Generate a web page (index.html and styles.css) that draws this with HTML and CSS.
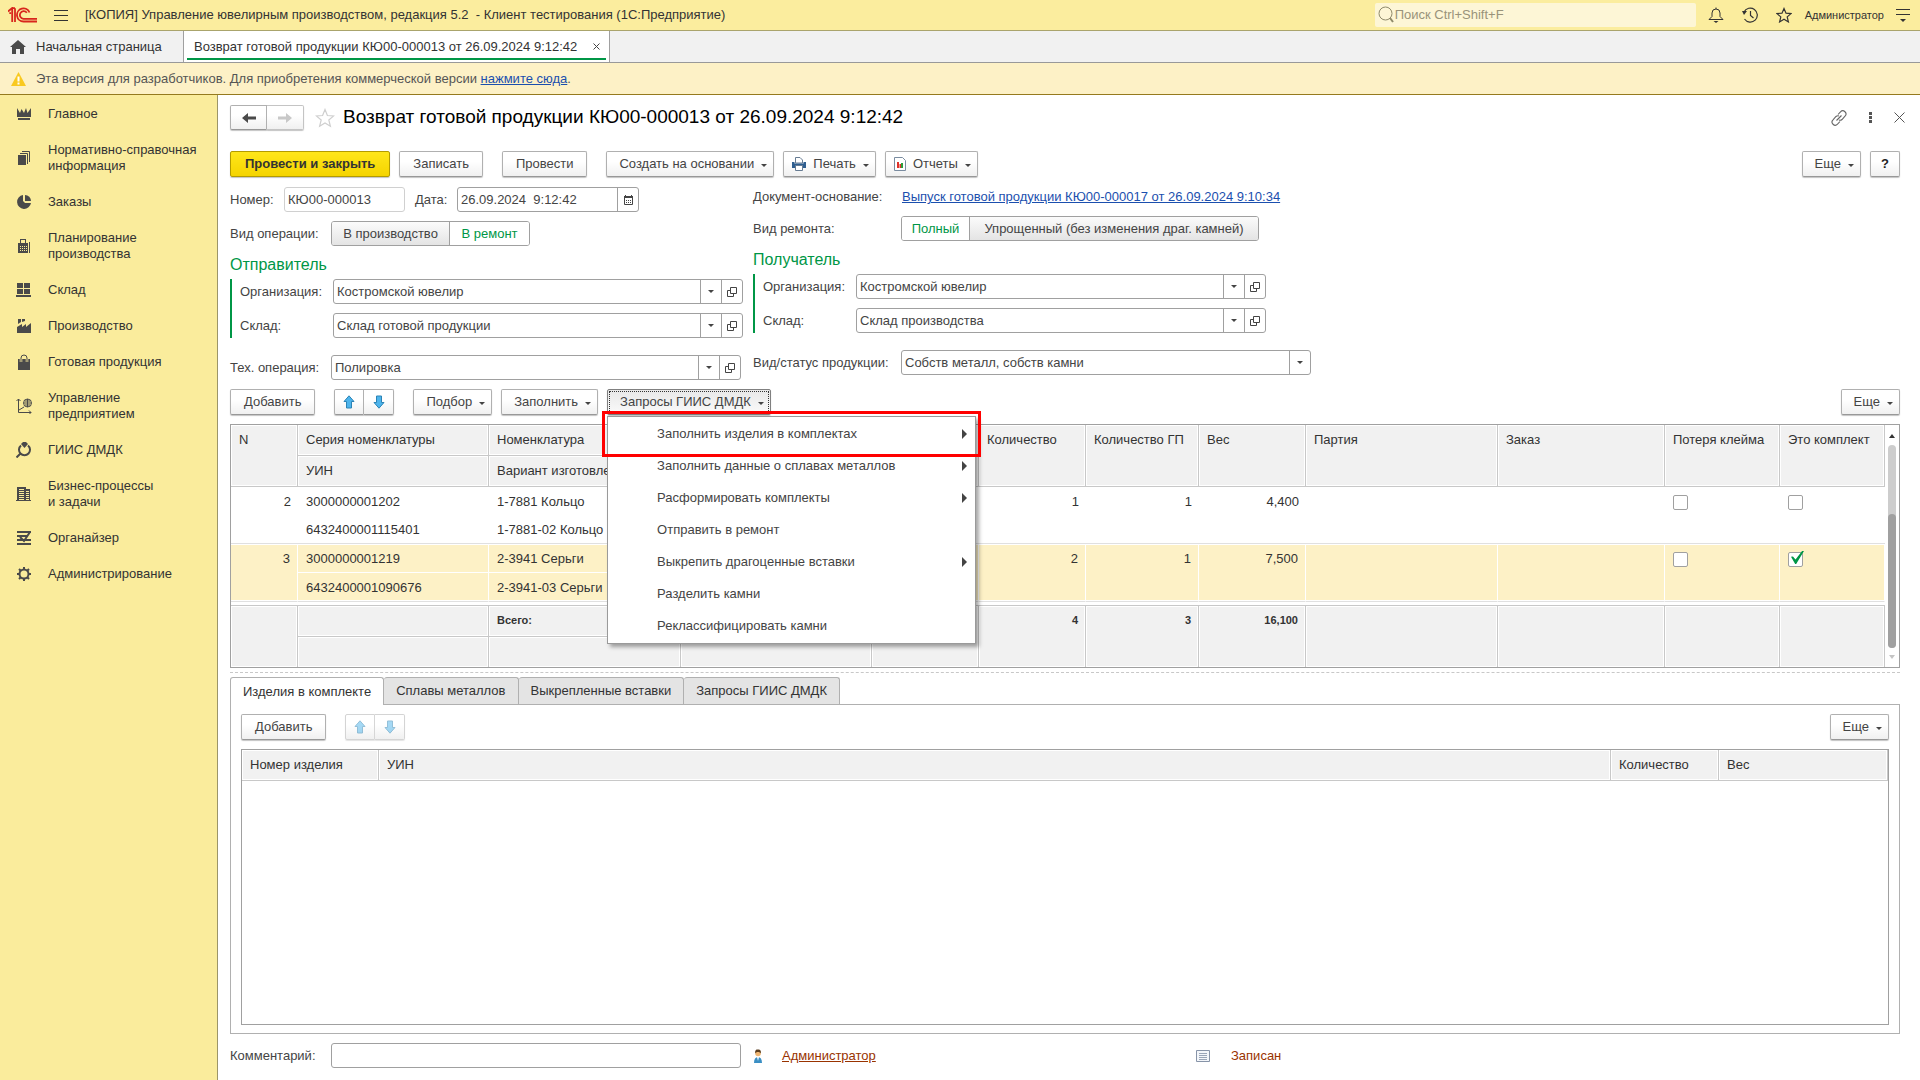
FILE: index.html
```html
<!DOCTYPE html>
<html lang="ru">
<head>
<meta charset="utf-8">
<meta name="viewport" content="width=device-width, initial-scale=1">
<title>Возврат готовой продукции КЮ00-000013</title>
<link rel="stylesheet" href="styles.css">
</head>
<body>
<svg class="sprite" aria-hidden="true">
  <symbol id="open" viewBox="0 0 10 10"><path d="M3.500 .5h6v6h-6zM3 3.500H.5v6h6V7" fill="none" stroke="#444"/></symbol>
  <symbol id="up" viewBox="0 0 12 14"><path d="M6 .8 11 6.500H8.500v6.500h-5V6.500H1z" fill="#4db4ec" stroke="#2b83b5"/></symbol>
  <symbol id="down" viewBox="0 0 12 14"><path d="M6 13.200 11 7.500H8.500V1h-5v6.500H1z" fill="#4db4ec" stroke="#2b83b5"/></symbol>
</svg>

<header class="topbar">
  <svg class="logo" width="29" height="16" viewBox="0 0 29 16" fill="none" stroke="#d8261c" stroke-width="1.8"><path d="M0 4.500 4.200 1V15M2.200 7V5.200M7 1.200V15M4.200 1.200H7M21.500 5.500A6.500 6.500 0 1 0 15.500 14.500H29M18.800 5.800a3.800 3.800 0 1 0-3.300 6H29"/></svg>
  <button class="bare burger" type="button" aria-label="Меню"><svg width="14" height="12" viewBox="0 0 14 12" stroke="#333"><path d="M0 1.500h14M0 6.500h14M0 11.500h14"/></svg></button>
  <span class="app-title">[КОПИЯ] Управление ювелирным производством, редакция 5.2&nbsp; - Клиент тестирования (1С:Предприятие)</span>
  <label class="search"><svg width="16" height="18" viewBox="0 0 16 18" fill="none" stroke="#8f8a6a"><circle cx="7.500" cy="7.500" r="6.500"/><path d="m12 12 3 4" stroke-width="2"/></svg><input type="search" placeholder="Поиск Ctrl+Shift+F" aria-label="Поиск"></label>
  <button class="bare top-icon" type="button" aria-label="Уведомления"><svg width="16" height="16" viewBox="0 0 16 16" fill="none" stroke="#333"><path d="M1 12.500h14L12 9.500V6a4 4 0 0 0-8 0v3.500zM8 2V.5"/><path d="M5.500 14h5L8 16z" fill="#333" stroke="none"/></svg></button>
  <button class="bare top-icon" type="button" aria-label="История"><svg width="16" height="16" viewBox="0 0 16 16" fill="none" stroke="#333" stroke-width="1.200"><path d="M2 5A7 7 0 1 1 2.500 12M8.500 4v4.500l3 2.500"/><path d="M0 4h5L2 8z" fill="#333" stroke="none"/></svg></button>
  <button class="bare top-icon" type="button" aria-label="Избранное"><svg width="16" height="16" viewBox="0 0 16 16" fill="none" stroke="#333" stroke-width="1.200"><path d="m8 1.500 2 4.700 5 .4-3.800 3.300 1.200 5L8 12.200 3.600 14.900l1.200-5L1 6.600l5-.4z"/></svg></button>
  <a class="user" href="#">Администратор</a>
  <button class="bare" type="button" aria-label="Настройки"><svg width="14" height="14" viewBox="0 0 14 14" stroke="#333"><path d="M0 1.500h14M0 6.500h14"/><path d="M4 11h6l-3 3z" fill="#333" stroke="none"/></svg></button>
</header>

<nav class="tabs" aria-label="Открытые окна">
  <a class="tab home" href="#"><svg width="16" height="14" viewBox="0 0 16 14" fill="#4a4a4a"><path d="M8 0 0 7h2v7h4V9h4v5h4V7h2z"/></svg>Начальная страница</a>
  <div class="tab active"><a href="#">Возврат готовой продукции КЮ00-000013 от 26.09.2024 9:12:42</a><button class="bare" type="button" aria-label="Закрыть вкладку"><svg width="7" height="7" viewBox="0 0 7 7" stroke="#444"><path d="m.5.5 6 6M6.500.5l-6 6"/></svg></button></div>
</nav>

<div class="notice"><svg width="15" height="14" viewBox="0 0 15 14"><path d="M7.500 0 15 14H0z" fill="#f9c920"/><path d="M7.500 4.500v5M7.500 10.500v2" stroke="#fff" stroke-width="2"/></svg><span>Эта версия для разработчиков. Для приобретения коммерческой версии <a href="#">нажмите сюда</a>.</span></div>

<div class="workspace">
<nav class="sidebar" aria-label="Разделы">
  <a href="#"><svg viewBox="0 0 16 16"><path d="M1 2l3 5 1.500-4L8 7l2-5 1.500 5L15 2v9H1zM2 12h12v2H2z"/></svg>Главное</a>
  <a href="#"><svg viewBox="0 0 16 16"><path d="M2 5h8v10H2z"/><path d="M4 3.500h7.500V14M6 1.500h7.500V12" fill="none" stroke="#4a4a4a"/></svg>Нормативно-справочная информация</a>
  <a href="#"><svg viewBox="0 0 16 16"><path d="M7 1a7 7 0 1 0 8 8H9L7 7z"/><path d="M9 1a6 6 0 0 1 6 6H9z"/></svg>Заказы</a>
  <a href="#"><svg viewBox="0 0 16 16"><path d="M4 1h6v4h2v10H2V5h2z"/><path d="M5 2h4v3H5z" fill="#faec9c"/><path d="M4 8.500h7M4 10.500h7M4 12.500h7" stroke="#faec9c" stroke-dasharray="1 1"/><path d="M13.500 4v11" stroke="#4a4a4a"/></svg>Планирование<br>производства</a>
  <a href="#"><svg viewBox="0 0 16 16"><path d="M1 1h6v5H1zM8 1h6v5H8zM1 7h6v5H1zM8 7h6v5H8zM0 13h15v2H0z"/></svg>Склад</a>
  <a href="#"><svg viewBox="0 0 16 16"><path d="M1 9l5-3v3l4-3v3l5-4v10H1zM2 1h3v3L2 6zM6 1h3v2L6 4z"/></svg>Производство</a>
  <a href="#"><svg viewBox="0 0 16 16"><path d="M2 5h12v11H2z"/><path d="M5 8V4a3 3 0 0 1 6 0v4" fill="none" stroke="#faec9c" stroke-width="2.500"/><path d="M5 8V4a3 3 0 0 1 6 0v4" fill="none" stroke="#4a4a4a"/></svg>Готовая продукция</a>
  <a href="#"><svg viewBox="0 0 16 16"><g fill="none" stroke="#4a4a4a"><path d="M2.500 1v13.500H15M.5 3l2-2 2 2M13 12.500l2 2-2 2M3 12l5-3"/><circle cx="11.500" cy="5" r="4"/><path d="M8 5h7M9 3h5M9 7h5M11.500 1v8"/></g></svg>Управление<br>предприятием</a>
  <a href="#"><svg viewBox="0 0 16 16"><path d="M5 2l2-2h3l2 2-3.500 4z"/><g fill="none" stroke="#4a4a4a" stroke-width="2"><path d="M5 3.500a5.500 5.500 0 1 0 7 0M4 12l-3.500 3.500"/></g></svg>ГИИС ДМДК</a>
  <a href="#"><svg viewBox="0 0 16 16"><path d="M1 1h9v2h4v11h1v1H0v-1h1z"/><path d="M3 3.500h5M3 5.500h5M3 7.500h5M3 9.500h5M3 11.500h5M3 13.500h5M10 5.500h3M10 7.500h3M10 9.500h3M10 11.500h3M10 13.500h3" stroke="#faec9c"/></svg>Бизнес-процессы<br>и задачи</a>
  <a href="#"><svg viewBox="0 0 16 16"><path d="M1 1h14v2H1zM1 5h11v2H1zM1 9h14v2H1zM1 13h14v2H1z"/><path d="M4 7l4 4 6-9" fill="none" stroke="#4a4a4a" stroke-width="2"/></svg>Органайзер</a>
  <a href="#"><svg viewBox="0 0 16 16"><g fill="none" stroke="#4a4a4a"><circle cx="8" cy="8" r="4.500" stroke-width="2"/><path d="M8 1v3M8 12v3M1 8h3M12 8h3M3 3l2 2M11 11l2 2M13 3l-2 2M5 11l-2 2" stroke-width="2"/></g></svg>Администрирование</a>
</nav>

<main class="page">
  <div class="heading">
    <div class="pair"><button class="btn" type="button" aria-label="Назад"><svg width="14" height="12" viewBox="0 0 14 12"><path d="M0 6l6-5v3.500h8v3H6V11z" fill="#4a4a4a"/></svg></button><button class="btn off" type="button" disabled aria-label="Вперед"><svg width="14" height="12" viewBox="0 0 14 12"><path d="M14 6 8 1v3.500H0v3h8V11z" fill="#c8c8c8"/></svg></button></div>
    <button class="bare fav" type="button" aria-label="В избранное"><svg width="20" height="20" viewBox="0 0 20 20" fill="none" stroke="#cfcfcf" stroke-width="1.200"><path d="m10 1.500 2.400 6 6.300.4-4.900 4.100 1.600 6.300L10 14.900l-5.400 3.400L6.200 12 1.300 7.900l6.300-.4z"/></svg></button>
    <h1>Возврат готовой продукции КЮ00-000013 от 26.09.2024 9:12:42</h1>
    <div class="window-tools">
      <button class="bare" type="button" aria-label="Ссылка"><svg width="16" height="16" viewBox="0 0 16 16" fill="none" stroke="#666" stroke-width="1.100"><path d="M7 4.500 9.500 1.800a3 3 0 0 1 4.500 4.400L11 9.500a3 3 0 0 1-3 .5M9 11.500l-2.500 2.700A3 3 0 0 1 2 9.800L5 6.500A3 3 0 0 1 8 6M5.500 10.500l5-5"/></svg></button>
      <button class="bare" type="button" aria-label="Действия"><svg width="3" height="11" viewBox="0 0 3 11" fill="#555"><path d="M0 0h3v3H0zM0 4h3v3H0zM0 8h3v3H0z"/></svg></button>
      <button class="bare" type="button" aria-label="Закрыть"><svg width="11" height="11" viewBox="0 0 11 11" stroke="#555"><path d="m.5.5 10 10M10.500.5l-10 10"/></svg></button>
    </div>
  </div>

  <div class="commands">
    <div class="group"><button class="btn primary" type="button">Провести и закрыть</button><button class="btn" type="button">Записать</button></div>
    <button class="btn" type="button">Провести</button>
    <div class="group">
      <button class="btn more" type="button">Создать на основании<i class="caret"></i></button>
      <button class="btn more icon" type="button"><svg width="14" height="14" viewBox="0 0 14 14"><path d="M3.500.5H8l2.500 2.500v3h-7z" fill="#fff" stroke="#667b92"/><path d="M0 5h2.500v1.500h9V5H14v6H0z" fill="#2f5e8f"/><path d="M3.500 8.500h7v5h-7z" fill="#fff" stroke="#667b92"/></svg>Печать<i class="caret"></i></button>
      <button class="btn more icon" type="button"><svg width="12" height="14" viewBox="0 0 12 14"><path d="M.5.5h8l3 3v10H.5z" fill="#fff" stroke="#7a8ca0"/><path d="M3 5h2v6H3zM5.500 7h1.500v4H5.500z" fill="#e0322a"/><path d="M7 6h2v5H7z" fill="#2d9e3c"/></svg>Отчеты<i class="caret"></i></button>
    </div>
    <div class="group end"><button class="btn more" type="button">Еще<i class="caret"></i></button><button class="btn help" type="button" aria-label="Справка">?</button></div>
  </div>

  <form class="form">
    <div class="column">
      <div class="row"><label class="cap num" for="number">Номер:</label><span class="field pale number"><input id="number" value="КЮ00-000013"></span><label class="cap date-cap" for="date">Дата:</label><span class="field date"><input id="date" value="26.09.2024  9:12:42"><button type="button" aria-label="Календарь"><svg width="9" height="10" viewBox="0 0 9 10"><path d="M0 1h1V0h1v1h5V0h1v1h1v2H0z" fill="#444"/><path d="M.5 3v6.500h8V3" fill="none" stroke="#444"/><path d="M2 5.500h5M2 7.500h5" stroke="#444" stroke-dasharray="1 1"/></svg></button></span></div>
      <div class="row"><span class="cap">Вид операции:</span><span class="toggle" role="radiogroup" aria-label="Вид операции"><label class="wide"><input type="radio" name="kind">В производство</label><label class="mid"><input type="radio" name="kind" checked>В ремонт</label></span></div>
      <h2>Отправитель</h2>
      <div class="block">
        <div class="row"><label class="cap" for="org1">Организация:</label><span class="field"><input id="org1" value="Костромской ювелир"><button type="button" aria-label="Выбрать"><i class="caret"></i></button><button type="button" aria-label="Открыть"><svg width="10" height="10"><use href="#open"/></svg></button></span></div>
        <div class="row"><label class="cap" for="store1">Склад:</label><span class="field"><input id="store1" value="Склад готовой продукции"><button type="button" aria-label="Выбрать"><i class="caret"></i></button><button type="button" aria-label="Открыть"><svg width="10" height="10"><use href="#open"/></svg></button></span></div>
      </div>
      <div class="row last"><label class="cap" for="tech">Тех. операция:</label><span class="field"><input id="tech" value="Полировка"><button type="button" aria-label="Выбрать"><i class="caret"></i></button><button type="button" aria-label="Открыть"><svg width="10" height="10"><use href="#open"/></svg></button></span></div>
    </div>
    <div class="column right">
      <div class="row base"><span class="cap">Документ-основание:</span><a class="link" href="#">Выпуск готовой продукции КЮ00-000017 от 26.09.2024 9:10:34</a></div>
      <div class="row"><span class="cap">Вид ремонта:</span><span class="toggle" role="radiogroup" aria-label="Вид ремонта"><label class="slim"><input type="radio" name="repair" checked>Полный</label><label class="long"><input type="radio" name="repair">Упрощенный (без изменения драг. камней)</label></span></div>
      <h2>Получатель</h2>
      <div class="block">
        <div class="row"><label class="cap" for="org2">Организация:</label><span class="field"><input id="org2" value="Костромской ювелир"><button type="button" aria-label="Выбрать"><i class="caret"></i></button><button type="button" aria-label="Открыть"><svg width="10" height="10"><use href="#open"/></svg></button></span></div>
        <div class="row"><label class="cap" for="store2">Склад:</label><span class="field"><input id="store2" value="Склад производства"><button type="button" aria-label="Выбрать"><i class="caret"></i></button><button type="button" aria-label="Открыть"><svg width="10" height="10"><use href="#open"/></svg></button></span></div>
      </div>
      <div class="row last"><label class="cap" for="status">Вид/статус продукции:</label><span class="field choice"><select id="status"><option>Собств металл, собств камни</option></select><i class="caret"></i></span></div>
    </div>
  </form>

  <div class="commands items">
    <button class="btn" type="button">Добавить</button>
    <div class="pair arrows"><button class="btn" type="button" aria-label="Вверх"><svg width="12" height="14"><use href="#up"/></svg></button><button class="btn" type="button" aria-label="Вниз"><svg width="12" height="14"><use href="#down"/></svg></button></div>
    <div class="group">
      <button class="btn more" type="button">Подбор<i class="caret"></i></button>
      <button class="btn more" type="button">Заполнить<i class="caret"></i></button>
      <div class="dropdown">
        <button class="btn more pressed" type="button" aria-expanded="true">Запросы ГИИС ДМДК<i class="caret"></i></button>
        <div class="menu" role="menu">
          <button class="sub" type="button" role="menuitem">Заполнить изделия в комплектах</button>
          <button class="sub" type="button" role="menuitem">Заполнить данные о сплавах металлов</button>
          <button class="sub" type="button" role="menuitem">Расформировать комплекты</button>
          <button type="button" role="menuitem">Отправить в ремонт</button>
          <button class="sub" type="button" role="menuitem">Выкрепить драгоценные вставки</button>
          <button type="button" role="menuitem">Разделить камни</button>
          <button type="button" role="menuitem">Реклассифицировать камни</button>
          <div class="marker"></div>
        </div>
      </div>
    </div>
    <div class="group end"><button class="btn more" type="button">Еще<i class="caret"></i></button></div>
  </div>

  <div class="sheet">
    <table class="goods">
      <colgroup><col class="c67"><col class="c191"><col class="c192"><col class="c191"><col class="c107"><col class="c107"><col class="c113"><col class="c107"><col class="c192"><col class="c167"><col class="c115"><col class="c105"></colgroup>
      <thead>
        <tr><th rowspan="2">N</th><th>Серия номенклатуры</th><th>Номенклатура</th><th></th><th rowspan="2"></th><th rowspan="2">Количество</th><th rowspan="2">Количество ГП</th><th rowspan="2">Вес</th><th rowspan="2">Партия</th><th rowspan="2">Заказ</th><th rowspan="2">Потеря клейма</th><th rowspan="2">Это комплект</th></tr>
        <tr><th>УИН</th><th>Вариант изготовления</th><th></th></tr>
      </thead>
      <tbody>
        <tr class="first"><td class="n" rowspan="2">2</td><td>3000000001202</td><td>1-7881 Кольцо</td><td></td><td rowspan="2"></td><td class="n" rowspan="2">1</td><td class="n" rowspan="2">1</td><td class="n" rowspan="2">4,400</td><td rowspan="2"></td><td rowspan="2"></td><td class="tick" rowspan="2"><input type="checkbox" aria-label="Потеря клейма"></td><td class="tick" rowspan="2"><input type="checkbox" aria-label="Это комплект"></td></tr>
        <tr class="second"><td>6432400001115401</td><td>1-7881-02 Кольцо</td><td></td></tr>
        <tr class="selected"><td class="n" rowspan="2">3</td><td class="upper">3000000001219</td><td class="upper">2-3941 Серьги</td><td class="upper"></td><td rowspan="2"></td><td class="n" rowspan="2">2</td><td class="n" rowspan="2">1</td><td class="n" rowspan="2">7,500</td><td rowspan="2"></td><td rowspan="2"></td><td class="tick" rowspan="2"><input type="checkbox" aria-label="Потеря клейма"></td><td class="tick" rowspan="2"><input type="checkbox" aria-label="Это комплект" checked></td></tr>
        <tr class="selected"><td>6432400001090676</td><td>2-3941-03 Серьги</td><td></td></tr>
      </tbody>
      <tfoot>
        <tr class="spacer"><td colspan="12"></td></tr>
        <tr><td class="edge" rowspan="2"></td><td></td><td>Всего:</td><td></td><td class="edge" rowspan="2"></td><td class="n edge" rowspan="2">4</td><td class="n edge" rowspan="2">3</td><td class="n edge" rowspan="2">16,100</td><td class="edge" rowspan="2"></td><td class="edge" rowspan="2"></td><td class="edge" rowspan="2"></td><td class="edge" rowspan="2"></td></tr>
        <tr><td class="edge"></td><td class="edge"></td><td class="edge"></td></tr>
      </tfoot>
    </table>
    <div class="scroll"><i class="tri-up"></i><div class="track"><div class="thumb"></div></div><i class="tri-down"></i></div>
  </div>

  <div class="splitter"></div>

  <section class="lower">
    <div class="subtabs" role="tablist"><button class="on" type="button" role="tab" aria-selected="true">Изделия в комплекте</button><button type="button" role="tab">Сплавы металлов</button><button type="button" role="tab">Выкрепленные вставки</button><button type="button" role="tab">Запросы ГИИС ДМДК</button></div>
    <div class="panel">
      <div class="commands inner">
        <button class="btn" type="button">Добавить</button>
        <div class="pair arrows dim"><button class="btn" type="button" disabled aria-label="Вверх"><svg width="12" height="14"><use href="#up"/></svg></button><button class="btn" type="button" disabled aria-label="Вниз"><svg width="12" height="14"><use href="#down"/></svg></button></div>
        <div class="group end"><button class="btn more" type="button">Еще<i class="caret"></i></button></div>
      </div>
      <div class="sheet grow">
        <table class="kit">
          <colgroup><col class="k1"><col><col class="k3"><col class="k4"></colgroup>
          <thead><tr><th>Номер изделия</th><th>УИН</th><th>Количество</th><th>Вес</th></tr></thead>
        </table>
      </div>
    </div>
  </section>

  <footer class="bottom">
    <label class="cap" for="comment">Комментарий:</label><span class="field comment"><input id="comment"></span>
    <svg class="person" width="12" height="14" viewBox="0 0 12 14"><path d="M2 14c0-4 1.500-6 4-6s4 2 4 6z" fill="#3a8fc4"/><path d="M5 8h2l-1 4z" fill="#fff"/><circle cx="6" cy="4.500" r="2.800" fill="#f0b673"/><path d="M3 4.500C3 1 4 .5 6 .5s3 .5 3 4C8 2.500 4 2.500 3 4.500z" fill="#5a3d1e"/></svg>
    <a class="author" href="#">Администратор</a>
    <svg class="doc" width="14" height="12" viewBox="0 0 14 12"><path d="M.5.5h13v11H.5z" fill="#f3f6fa" stroke="#8794a8"/><path d="M3 3.500h8M3 5.500h8M3 7.500h8M3 9.500h8" stroke="#9aa6b8"/></svg>
    <span class="state">Записан</span>
  </footer>
</main>
</div>
</body>
</html>
```
FILE: styles.css
```css
* { box-sizing: border-box; }
body { margin: 0; min-height: 100vh; display: flex; flex-direction: column; background: #fff; color: #444; font: 13px/16px "Liberation Sans", Arial, sans-serif; }
button, input, select { font: inherit; color: inherit; margin: 0; }
a { color: inherit; text-decoration: none; }
svg { display: block; flex: none; }
.sprite { position: absolute; width: 0; height: 0; }
.bare { border: 0; background: none; padding: 0; display: flex; align-items: center; justify-content: center; }

.topbar { display: flex; align-items: center; height: 31px; padding: 0 10px 0 8px; background: #fbed9e; border-bottom: 1px solid #aaa46c; color: #333; }
.burger { margin: 0 17px; }
.app-title { flex: 1; white-space: nowrap; overflow: hidden; }
.search { display: flex; align-items: center; width: 321px; height: 24px; padding: 0 3px; background: #fdf6d6; border-radius: 2px; margin-right: 3px; }
.search input { flex: 1; border: 0; background: none; padding: 0 0 1px 1px; outline: 0; }
.search input::placeholder { color: #99937a; opacity: 1; }
.top-icon { width: 34px; height: 30px; }
.user { font-size: 11px; margin: 0 12px 0 4px; }

.tabs { display: flex; height: 32px; background: #f1f1f1; border-bottom: 1px solid #999; color: #333; }
.tab { display: flex; align-items: center; border-right: 1px solid #a0a0a0; white-space: nowrap; }
.home { width: 184px; padding-left: 10px; gap: 10px; }
.active { position: relative; background: #fff; padding: 0 9px 0 10px; gap: 16px; }
.active::after { content: ""; position: absolute; left: 3px; right: 3px; bottom: 2px; height: 2px; background: #009646; }

.notice { display: flex; align-items: center; gap: 10px; height: 32px; padding-left: 11px; background: #fdf1c6; border-bottom: 1px solid #957a1e; color: #555; }
.notice a, .link { color: #1b4fae; text-decoration: underline; }

.workspace { flex: 1; display: grid; grid-template-columns: 218px minmax(0, 1fr); }
.sidebar { background: #faec9c; border-right: 1px solid #9c9568; padding-top: 1px; color: #333; }
.sidebar a { display: block; position: relative; padding: 10px 8px 10px 48px; }
.sidebar svg { position: absolute; left: 16px; top: calc(50% - 8px); width: 16px; height: 16px; fill: #4a4a4a; }

.page { display: flex; flex-direction: column; padding: 10px 20px 12px 12px; }
.heading { display: flex; align-items: center; height: 25px; }
.heading h1 { font-size: 19px; line-height: 24px; font-weight: 400; color: #000; margin: 0; padding-bottom: 2px; flex: 1; }
.fav { margin: 0 8px 0 11px; }
.window-tools { display: flex; align-items: center; gap: 22px; margin-right: -5px; }

.btn { display: inline-flex; align-items: center; justify-content: center; height: 26px; padding: 0 13px; border: 1px solid #b0b0b0; border-bottom-color: #989898; border-radius: 2px; background: linear-gradient(#fff 40%, #f0f0f0); box-shadow: 0 1px 1px #c4c4c4; white-space: nowrap; }
.primary { padding: 0 14px; background: linear-gradient(#ffe61a, #f5d400); border-color: #b39b00; color: #333; font-weight: 700; }
.more { padding: 0 6px 0 12px; gap: 7px; }
.icon { padding-left: 8px; }
.help { width: 30px; padding: 0; font-weight: 700; color: #222; }
.caret { width: 0; height: 0; border: 3px solid transparent; border-top-color: #444; border-bottom: 0; margin-top: 2px; }
.pair { display: flex; }
.pair .btn { width: 37px; padding: 0; border-radius: 2px 0 0 2px; height: 25px; }
.pair .btn + .btn { border-left: 0; border-radius: 0 2px 2px 0; }
.pair .off { border-color: #c4c4c4; }
.arrows .btn { width: 30px; height: 26px; }
.dim .btn { border-color: #d4d4d4; box-shadow: 0 1px 1px #e4e4e4; }
.dim svg { opacity: .5; }
.commands { display: flex; gap: 19px; margin-top: 21px; }
.group { display: flex; gap: 9px; }
.end { margin-left: auto; }
.items { margin-top: 9px; }

.form { display: grid; grid-template-columns: 513px 558px; gap: 10px; margin-top: 10px; align-items: start; }
.row { display: flex; align-items: center; height: 25px; margin-bottom: 9px; white-space: nowrap; }
.row.last { margin: 17px 0 0; }
.row.base { height: 20px; }
.cap { width: 101px; flex: none; }
.cap.num { width: 54px; }
.cap.date-cap { width: 42px; }
.block .cap { width: 93px; }
.right .cap { width: 148px; }
.right .block .cap { width: 93px; }
.right .block .field { flex: 0 1 410px; }
.row.base .cap { width: 149px; }
.column h2 { font-size: 16px; line-height: 22px; font-weight: 400; color: #009646; margin: -1px 0 0; padding-bottom: 3px; }
.block { border-left: 2px solid #009646; padding-left: 8px; }
.block .row:last-child { margin: 0; }
.field { display: flex; flex: 1; min-width: 0; height: 25px; border: 1px solid #a0a0a0; border-radius: 3px; background: #fff; }
.column:not(.right) > .row.last .field { flex: 0 1 410px; }
.field input, .field select { flex: 1; min-width: 0; width: 0; border: 0; outline: 0; background: none; padding: 0 3px; white-space: pre; }
.field select { appearance: none; }
.field button { width: 21px; border: 0; border-left: 1px solid #a0a0a0; background: none; padding: 0; display: flex; align-items: center; justify-content: center; }
.field .caret { margin-top: 0; }
.pale { border-color: #d0d0d0; }
.row .number { flex: 0 0 121px; margin-right: 10px; }
.row .date { flex: 0 0 182px; }
.choice { position: relative; }
.choice .caret { position: absolute; right: 7px; top: 10px; pointer-events: none; }
.choice::after { content: ""; position: absolute; right: 20px; top: 0; bottom: 0; border-left: 1px solid #a0a0a0; }
.toggle { display: flex; height: 25px; border: 1px solid #a0a0a0; border-radius: 3px; overflow: hidden; }
.toggle label { display: flex; align-items: center; justify-content: center; background: linear-gradient(#fbfbfb, #e4e4e4); }
.toggle label + label { border-left: 1px solid #a0a0a0; }
.toggle input { appearance: none; width: 0; height: 0; }
.toggle label:has(:checked) { background: #fff; color: #009646; }
.wide { width: 117px; }
.mid { width: 80px; }
.slim { width: 67px; }
.long { width: 289px; }

.dropdown { position: relative; }
.pressed { border-color: #808080; background: linear-gradient(#e8e8e8, #fafafa); outline: 1px dotted #333; outline-offset: -3px; }
.menu { position: absolute; left: 0; top: 27px; width: 369px; z-index: 2; padding: 1px 0; border: 1px solid #9a9a9a; background: #fff; box-shadow: 3px 3px 4px rgba(0, 0, 0, .35); }
.menu button { display: flex; align-items: center; justify-content: space-between; width: 100%; height: 32px; border: 0; background: none; padding: 0 8px 0 49px; }
.menu .sub::after { content: ""; border: 5px solid transparent; border-left-color: #444; border-right: 0; }
.marker { position: absolute; left: -6px; right: -6px; top: -6px; height: 46px; border: 3px solid #f00; pointer-events: none; }

.sheet { display: flex; margin-top: 9px; border: 1px solid #a0a0a0; }
table { width: 100%; table-layout: fixed; border-collapse: separate; border-spacing: 0; color: #333; }
th, td { padding: 7px 8px 0; vertical-align: top; text-align: left; font-weight: 400; white-space: nowrap; overflow: hidden; }
th, tfoot td { background: #f1f1f1; border-right: 1px solid #c8c8c8; border-bottom: 1px solid #c8c8c8; box-shadow: inset 0 0 0 1px #fff; }
thead tr { height: 31px; }
.c67 { width: 67px; } .c105 { width: 105px; } .c107 { width: 107px; } .c113 { width: 113px; } .c115 { width: 115px; }
.c167 { width: 167px; } .c191 { width: 191px; } .c192 { width: 192px; }
.first { height: 28px; }
.second, .selected { height: 29px; }
.second td, .first [rowspan], .selected td { border-bottom: 1px solid #e0e0e0; }
.selected td { background: #fdf1c6; border-right: 1px solid #fff; box-shadow: inset 0 1px #fff, inset 0 -1px #fff; }
.selected td.upper { border-bottom-color: #fff; box-shadow: inset 0 1px #fff; }
.selected:last-child td { box-shadow: inset 0 -1px #fff; }
td.n { text-align: right; }
tbody td.n, tfoot td.n { padding-right: 7px; }
.tick { padding-top: 8px; }
.tick input { appearance: none; display: block; position: relative; width: 15px; height: 15px; border: 1px solid #a0a0a0; border-radius: 2px; background: #fff; }
.tick input:checked::after { content: ""; position: absolute; left: 2px; top: -2px; width: 13px; height: 13px; background: #009646; clip-path: polygon(0 45%, 15% 42%, 35% 66%, 85% 0, 100% 0, 40% 100%, 32% 100%); }
tfoot tr { height: 31px; }
tfoot td { font-size: 11px; font-weight: 700; padding-top: 6px; }
tfoot tr:last-child { height: 30px; }
tfoot td.edge { border-bottom: 0; }
tfoot .spacer { height: 4px; }
tfoot .spacer td { padding: 0; background: #fff; border-right: 0; }
.scroll { width: 14px; flex: none; display: flex; flex-direction: column; align-items: center; padding: 9px 0 8px; gap: 7px; }
.tri-up { border: 3px solid transparent; border-bottom: 4px solid #333; border-top: 0; }
.tri-down { border: 3px solid transparent; border-top: 4px solid #c4c4c4; border-bottom: 0; }
.track { flex: 1; width: 8px; border-radius: 4px; background: #cdcdcd; display: flex; align-items: flex-end; }
.thumb { width: 8px; height: 66%; border-radius: 4px; background: #a0a0a0; }
.splitter { margin: 4px 0; border-top: 1px dashed #c8c8c8; }

.lower { flex: 1; display: flex; flex-direction: column; }
.subtabs { display: flex; height: 27px; }
.subtabs button { border: 1px solid #b0b0b0; border-left-width: 0; border-bottom: 0; border-radius: 3px 3px 0 0; background: #e4e4e4; padding: 0 12px; color: #333; }
.subtabs .on { border-left-width: 1px; background: #fff; height: 28px; z-index: 1; }
.panel { flex: 1; display: flex; flex-direction: column; border: 1px solid #b0b0b0; padding: 9px 10px 8px; }
.inner { margin-top: 0; }
.grow { flex: 1; align-items: flex-start; min-height: 120px; }
.kit .k1 { width: 137px; } .kit .k3 { width: 108px; } .kit .k4 { width: 169px; }

.bottom { display: flex; align-items: center; height: 25px; margin-top: 9px; }
.bottom .comment { flex: 0 1 410px; }
.person { margin: 0 18px 0 11px; }
.author { color: #993300; text-decoration: underline; width: 414px; }
.doc { margin-right: 21px; }
.state { color: #993300; }
```
